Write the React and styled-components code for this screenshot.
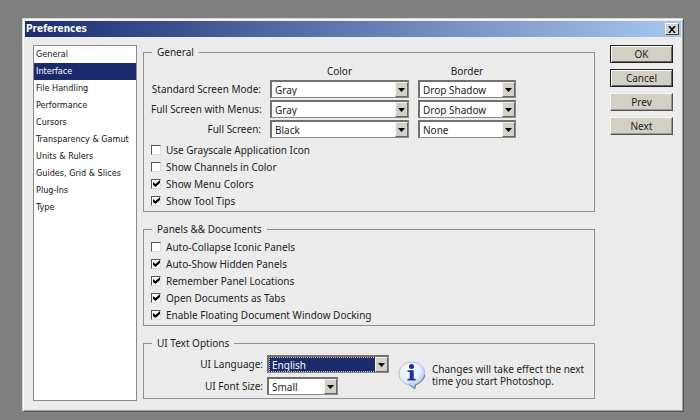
import React from "react";
import styled, { createGlobalStyle } from "styled-components";

const sections = [
  "General",
  "Interface",
  "File Handling",
  "Performance",
  "Cursors",
  "Transparency & Gamut",
  "Units & Rulers",
  "Guides, Grid & Slices",
  "Plug-Ins",
  "Type",
];

const screenModes = [
  { id: "standard", label: "Standard Screen Mode:", color: "Gray", border: "Drop Shadow" },
  { id: "menus", label: "Full Screen with Menus:", color: "Gray", border: "Drop Shadow" },
  { id: "full", label: "Full Screen:", color: "Black", border: "None" },
];

const generalChecks = [
  ["Use Grayscale Application Icon", false],
  ["Show Channels in Color", false],
  ["Show Menu Colors", true],
  ["Show Tool Tips", true],
];

const panelChecks = [
  ["Auto-Collapse Iconic Panels", false],
  ["Auto-Show Hidden Panels", true],
  ["Remember Panel Locations", true],
  ["Open Documents as Tabs", true],
  ["Enable Floating Document Window Docking", true],
];

function Dropdown({ options, $active, ...rest }) {
  return (
    <SelectFrame>
      <Select $active={$active} {...rest}>
        {options.map((option) => (
          <option key={option}>{option}</option>
        ))}
      </Select>
      <ArrowBox aria-hidden="true">
        <svg width="7" height="4" viewBox="0 0 7 4">
          <path d="M0 0H7L3.5 4Z" fill="#000" />
        </svg>
      </ArrowBox>
    </SelectFrame>
  );
}

function CheckList({ items }) {
  return (
    <Checks>
      {items.map(([label, checked]) => (
        <CheckLabel key={label}>
          <Tick>
            <input type="checkbox" defaultChecked={checked} />
            <svg width="7" height="7" viewBox="0 0 7 7" aria-hidden="true">
              <path d="M0 2V5L2.5 7L7 3V0L2.5 4Z" fill="#000" />
            </svg>
          </Tick>
          {label}
        </CheckLabel>
      ))}
    </Checks>
  );
}

function InfoIcon() {
  return (
    <svg width="28" height="29" viewBox="0 0 28 29" aria-hidden="true">
      <defs>
        <radialGradient id="bubble" cx="0.4" cy="0.3" r="0.75">
          <stop offset="0" stopColor="#fff" />
          <stop offset="0.55" stopColor="#e4eefb" />
          <stop offset="1" stopColor="#8fadde" />
        </radialGradient>
      </defs>
      <path
        d="M14 1C21.2 1 27 6.2 27 12.6C27 18 23 22.4 17.5 23.8L17 28L11.5 24C5 23.2 1 18.5 1 12.6C1 6.2 6.8 1 14 1Z"
        fill="url(#bubble)"
        stroke="#b4c3dd"
      />
      <path
        d="M26.7 14C25.5 19.5 21.5 22.7 17.3 23.7L16.8 27.7L11.5 23.8"
        fill="none"
        stroke="#66738f"
      />
      <circle cx="13.5" cy="5.6" r="2.5" fill="#1b2f9e" />
      <path d="M9.5 9.3H15.7V17.8H17.7V19.5H9.5V17.8H11.7V11H9.5Z" fill="#1b2f9e" />
    </svg>
  );
}

export default function App() {
  return (
    <>
      <GlobalStyle />
      <Dialog role="dialog" aria-labelledby="dialog-title">
        <TitleBar>
          <Title id="dialog-title">Preferences</Title>
          <CloseButton type="button" aria-label="Close">
            <svg width="8" height="7" viewBox="0 0 8 7" aria-hidden="true">
              <path d="M1 0L7 7M7 0L1 7" stroke="#000" strokeWidth="1.6" />
            </svg>
          </CloseButton>
        </TitleBar>
        <Body>
          <Sidebar>
            {sections.map((name) => (
              <SectionLink
                key={name}
                href="#"
                $selected={name === "Interface"}
                aria-current={name === "Interface" ? "page" : undefined}
              >
                {name}
              </SectionLink>
            ))}
          </Sidebar>

          <Groups>
            <Group>
              <Legend>General</Legend>
              <ModeGrid>
                <ColumnName $column={2}>Color</ColumnName>
                <ColumnName $column={3}>Border</ColumnName>
                {screenModes.map((mode) => (
                  <React.Fragment key={mode.id}>
                    <FieldLabel htmlFor={mode.id}>{mode.label}</FieldLabel>
                    <Dropdown
                      id={mode.id}
                      options={["Gray", "Black"]}
                      defaultValue={mode.color}
                    />
                    <Dropdown
                      aria-label={`${mode.label} border`}
                      options={["Drop Shadow", "None"]}
                      defaultValue={mode.border}
                    />
                  </React.Fragment>
                ))}
              </ModeGrid>
              <CheckList items={generalChecks} />
            </Group>

            <Group>
              <Legend>Panels && Documents</Legend>
              <CheckList items={panelChecks} />
            </Group>

            <Group>
              <Legend>UI Text Options</Legend>
              <TextOptions>
                <TextGrid>
                  <FieldLabel htmlFor="language">UI Language:</FieldLabel>
                  <Dropdown id="language" options={["English"]} $active />
                  <FieldLabel htmlFor="font-size">UI Font Size:</FieldLabel>
                  <SmallField>
                    <Dropdown id="font-size" options={["Small", "Medium", "Large"]} />
                  </SmallField>
                </TextGrid>
                <InfoIcon />
                <Note>Changes will take effect the next time you start Photoshop.</Note>
              </TextOptions>
            </Group>
          </Groups>

          <Actions>
            <ActionButton type="button" $strong>OK</ActionButton>
            <ActionButton type="button" $strong>Cancel</ActionButton>
            <ActionButton type="button">Prev</ActionButton>
            <ActionButton type="button">Next</ActionButton>
          </Actions>
        </Body>
      </Dialog>
    </>
  );
}

// Styles
const GlobalStyle = createGlobalStyle`
  * {
    box-sizing: border-box;
  }

  body {
    margin: 0;
    padding: 18px 16px 8px 22px;
    background: #808080;
    color: #1c1c1c;
    font: 10px/14px "Noto Sans", Tahoma, sans-serif;
  }

  button, select, input {
    margin: 0;
    color: inherit;
    font: inherit;
  }
`;

const Dialog = styled.main`
  background: #ececec;
  border: 1px solid;
  border-color: #d8d5cc #555 #555 #d8d5cc;
  box-shadow: inset 1px 1px #fff, inset -1px -1px #a0a0a0;
  padding: 2px;
`;

const TitleBar = styled.header`
  display: flex;
  align-items: center;
  justify-content: space-between;
  height: 16px;
  padding: 0 2px 0 1px;
  background: linear-gradient(to right, #1b2d70, #a6c8f0);
`;

const Title = styled.h1`
  margin: 0;
  color: #fff;
  font: bold 10px/14px "DejaVu Sans Condensed", Tahoma, sans-serif;
`;

const CloseButton = styled.button`
  display: flex;
  align-items: center;
  justify-content: center;
  width: 14px;
  height: 12px;
  padding: 0;
  background: #d6d3ca;
  border: 1px solid;
  border-color: #fff #444 #444 #fff;
`;

const Body = styled.div`
  display: flex;
  align-items: stretch;
  padding: 8px;
`;

const Sidebar = styled.nav`
  flex: 0 0 104px;
  margin-right: 6px;
  background: #fff;
  border: 1px solid #8c8c8c;
`;

const SectionLink = styled.a`
  display: block;
  height: 17px;
  padding-left: 2px;
  font: 9px/17px "DejaVu Sans Condensed", Tahoma, sans-serif;
  white-space: nowrap;
  text-decoration: none;
  color: ${(props) => (props.$selected ? "#fff" : "#111")};
  background: ${(props) => (props.$selected ? "#1a2a6c" : "transparent")};
`;

const Groups = styled.div`
  flex: 1;
  display: flex;
  flex-direction: column;
  gap: 10px;
  padding-bottom: 2px;
`;

const Group = styled.fieldset`
  min-width: 0;
  margin: 0;
  padding: 2px 7px;
  border: 1px solid #909090;
`;

const Legend = styled.legend`
  margin-left: 1px;
  padding: 0 5px;
`;

const ModeGrid = styled.div`
  display: grid;
  grid-template-columns: 110px 139px 98px;
  gap: 2px 9px;
  align-items: center;
  padding-top: 3px;
  margin-bottom: 3px;
`;

const ColumnName = styled.span`
  grid-column: ${(props) => props.$column};
  text-align: center;
`;

const FieldLabel = styled.label`
  text-align: right;
  white-space: nowrap;
`;

const SelectFrame = styled.span`
  display: flex;
  height: 18px;
  background: #fff;
  border: 1px solid;
  border-width: 2px 1px 1px 2px;
  border-color: #707070 #8a8a8a #8a8a8a #707070;
`;

const Select = styled.select`
  flex: 1;
  min-width: 0;
  margin-right: -13px;
  padding: 0 14px 0 2px;
  appearance: none;
  border: 1px dotted ${(props) => (props.$active ? "#d8cf9a" : "transparent")};
  border-radius: 0;
  color: ${(props) => (props.$active ? "#fff" : "inherit")};
  background: ${(props) => (props.$active ? "#1a2a6c" : "#fff")};
`;

const ArrowBox = styled.span`
  display: flex;
  flex: 0 0 13px;
  align-items: center;
  justify-content: center;
  background: #d4d0c8;
  border: 1px solid;
  border-color: #f2f2ee #666 #666 #f2f2ee;
  pointer-events: none;
  z-index: 1;
`;

const Checks = styled.div`
  display: flex;
  flex-direction: column;
  align-items: flex-start;
`;

const CheckLabel = styled.label`
  display: flex;
  align-items: center;
  gap: 5px;
  height: 17px;
`;

const Tick = styled.span`
  display: grid;
  place-items: center;

  input, svg {
    grid-area: 1 / 1;
  }

  input {
    width: 10px;
    height: 10px;
    appearance: none;
    background: #fff;
    border: 1px solid;
    border-color: #555 #ddd #ddd #555;
  }

  svg {
    pointer-events: none;
  }

  input:not(:checked) + svg {
    visibility: hidden;
  }
`;

const TextOptions = styled.div`
  display: flex;
  align-items: center;
  padding: 3px 0 1px;
`;

const TextGrid = styled.div`
  display: grid;
  grid-template-columns: 112px 122px;
  gap: 4px;
  align-items: center;
  margin-right: 9px;
`;

const SmallField = styled.div`
  width: 71px;
`;

const Note = styled.p`
  flex: 1;
  margin: 0 0 0 6px;
  line-height: 12px;
`;

const Actions = styled.div`
  display: flex;
  flex: 0 0 63px;
  flex-direction: column;
  gap: 6px;
  margin-left: 15px;
`;

const ActionButton = styled.button`
  height: 18px;
  padding: 0;
  background: #d3d0c6;
  border: 1px solid;
  border-color: ${(props) => (props.$strong ? "#222" : "#f8f8f4 #555 #555 #f8f8f4")};
  box-shadow: ${(props) =>
    props.$strong ? "inset 1px 1px #fff, inset -1px -1px #666" : "inset -1px -1px #999"};
`;
